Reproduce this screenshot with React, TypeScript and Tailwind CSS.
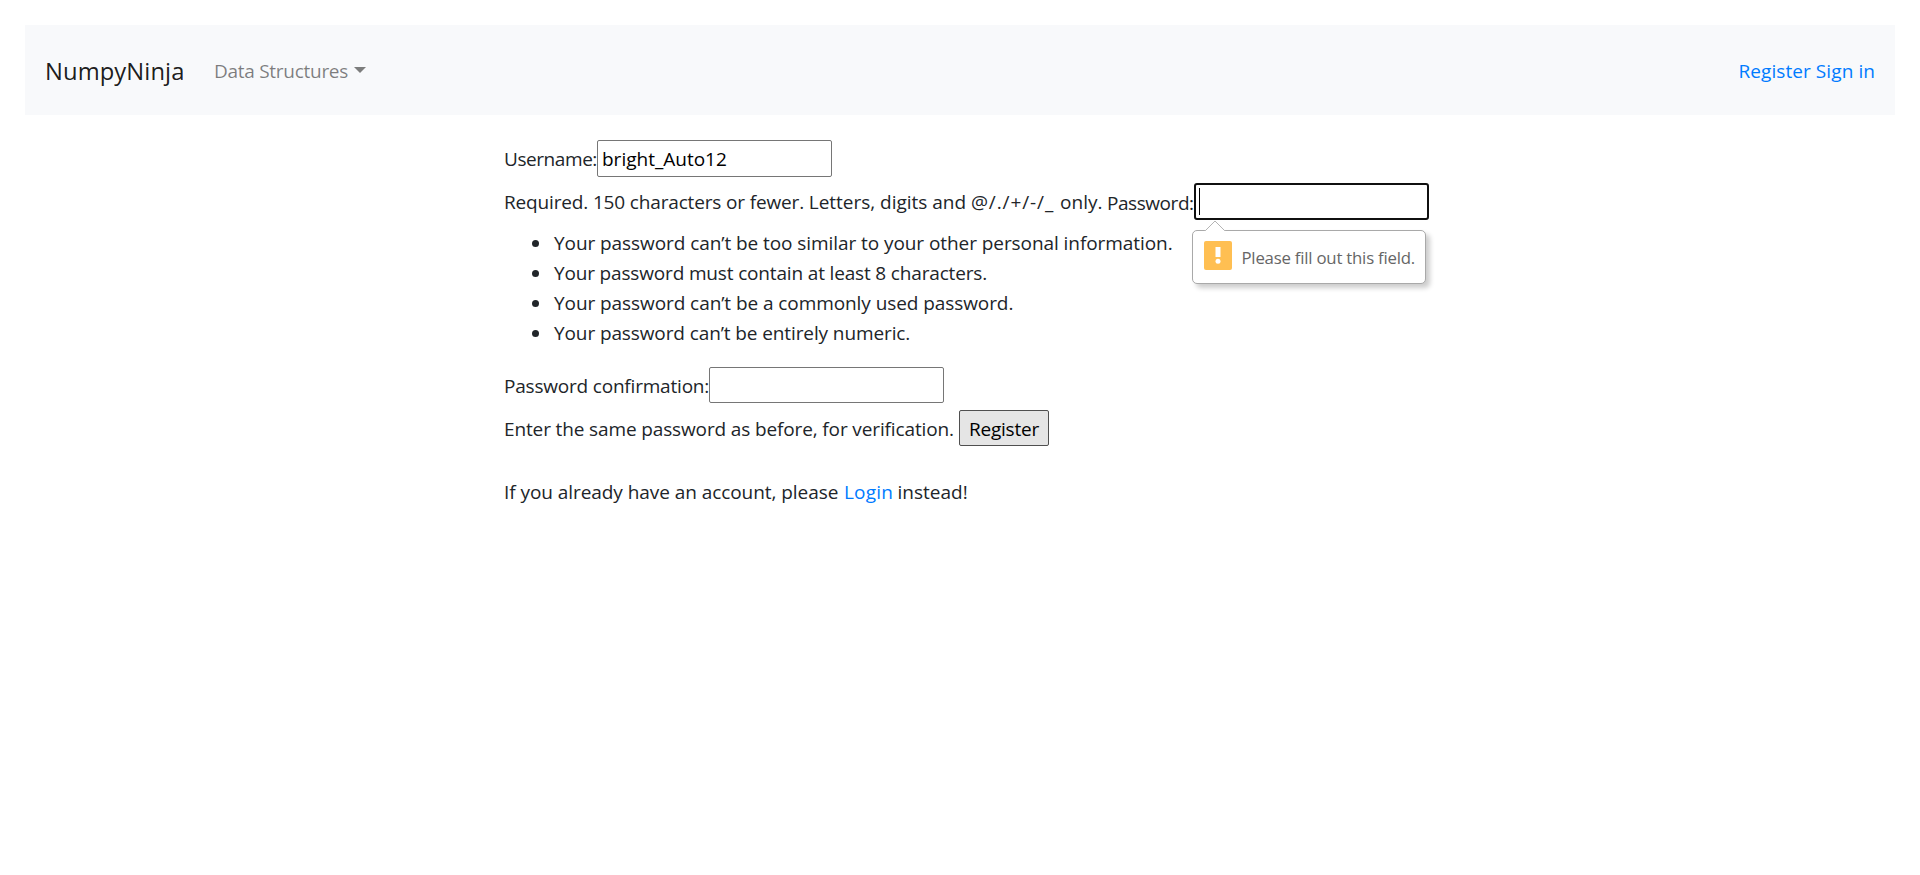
const passwordRules = [
  { text: "Your password can’t be too similar to your other personal information.", spacing: "tracking-[-0.07px]" },
  { text: "Your password must contain at least 8 characters.", spacing: "tracking-[-0.16px]" },
  { text: "Your password can’t be a commonly used password.", spacing: "tracking-[-0.075px]" },
  { text: "Your password can’t be entirely numeric.", spacing: "tracking-[-0.105px]" },
];

function Navbar() {
  return (
    <nav className="flex h-[90px] items-center bg-[#f8f9fb] px-5 pt-[2px]">
      <a href="#" className="w-[169px] text-[23.75px] leading-[38px] tracking-[0.1px] text-black/90">
        NumpyNinja
      </a>
      <a href="#" className="flex items-center text-black/50">
        <span className="w-[140px] tracking-[-0.28px]">Data Structures</span>
        <span className="-mt-[3px] h-0 w-0 border-x-[6px] border-t-[6px] border-x-transparent border-t-[#7c7d7d]" />
      </a>
      <div className="ml-auto flex gap-[5px] tracking-[0.08px] text-[#007bff]">
        <a href="#">Register</a>
        <a href="#">Sign in</a>
      </div>
    </nav>
  );
}

function ValidationBubble() {
  return (
    <div className="absolute top-[45px] -left-[4px] flex h-[54px] w-[234px] items-center rounded-[5px] border border-[#a9a9a9] bg-white pl-[10.5px] shadow-[4px_4px_5px_rgba(0,0,0,0.2)]">
      <svg className="absolute -top-[11px] left-[11px]" width="22" height="12" viewBox="0 0 22 12">
        <path d="M0.5 12 L1.5 10.5 L11 1 L20.5 10.5 L21.5 12 Z" fill="#fff" />
        <path d="M0.5 10.5 H1.5 L11 1 L20.5 10.5 H21.5" fill="none" stroke="#b4b4b4" />
      </svg>
      <svg className="-mt-[3px]" width="28" height="29" viewBox="0 0 28 29">
        <rect width="28" height="29" rx="2" fill="#ffbf52" />
        <path d="M11.5 6 H16.5 V16 H11.5 Z" fill="#fff" />
        <circle cx="14" cy="20.3" r="2.5" fill="#fff" />
      </svg>
      <span className="mt-px ml-[10px] text-[16.8px] tracking-[-0.22px] whitespace-nowrap text-[#666]">
        Please fill out this field.
      </span>
    </div>
  );
}

export default function App() {
  return (
    <div className="min-h-[875px] bg-white p-[25px] font-['Open_Sans',sans-serif] text-[19px] leading-[30px] font-[370] whitespace-nowrap text-[#212529]">
      <Navbar />
      <main className="pt-[25px] pl-[479px]">
        <form>
          <div className="flex h-[37px] items-center">
            <label className="mt-px w-[93px] tracking-[-0.43px]">Username:</label>
            <input
              readOnly
              value="bright_Auto12"
              className="h-[37px] w-[235px] rounded-[2px] border border-[#767676] bg-white px-[4px] pt-px text-black outline-none"
            />
          </div>
          <div className="mt-[6px] flex h-[37px] items-center">
            <span className="w-[603px]">
              <span className="tracking-[-0.155px]">Required. 150 characters or fewer. </span>
              <span className="tracking-[-0.02px]">Letters, digits and </span>
              <span className="tracking-[0.9px]">@/./+/-/_ </span>
              <span>only.</span>
            </span>
            <label className="mt-[2px] w-[87px] tracking-[-0.44px]">Password:</label>
            <div className="relative flex h-[37px] w-[235px] items-center rounded-[3px] border-2 border-[#101010] bg-white pl-[3px]">
              <span className="h-[27px] w-px bg-black" />
              <ValidationBubble />
            </div>
          </div>
          <ul className="mt-2 pl-7">
            {passwordRules.map((rule) => (
              <li key={rule.text} className="flex items-center">
                <span className="mt-px mr-[15px] h-[7px] w-[7px] rounded-full bg-[#212529]" />
                <span className={rule.spacing}>{rule.text}</span>
              </li>
            ))}
          </ul>
          <div className="mt-[19px] flex h-[36px] items-center">
            <label className="mt-[2px] w-[205px] tracking-[-0.2px]">Password confirmation:</label>
            <input
              readOnly
              className="h-[36px] w-[235px] rounded-[2px] border border-[#767676] bg-white px-1 outline-none"
            />
          </div>
          <div className="mt-[7px] flex h-[36px] items-center">
            <span className="mt-[2px] w-[455px] tracking-[-0.13px]">
              Enter the same password as before, for verification.
            </span>
            <button
              type="button"
              className="flex h-[36px] w-[90px] items-center justify-center rounded-[2px] border border-[#4f4f4f] bg-[#e5e5e5] pt-px tracking-[-0.2px] text-black"
            >
              Register
            </button>
          </div>
        </form>
        <p className="mt-[31px] flex">
          <span className="w-[340px] tracking-[-0.06px]">If you already have an account, please</span>
          <a href="#" className="w-[53.5px] tracking-[0.2px] text-[#007bff]">
            Login
          </a>
          <span>instead!</span>
        </p>
      </main>
    </div>
  );
}
